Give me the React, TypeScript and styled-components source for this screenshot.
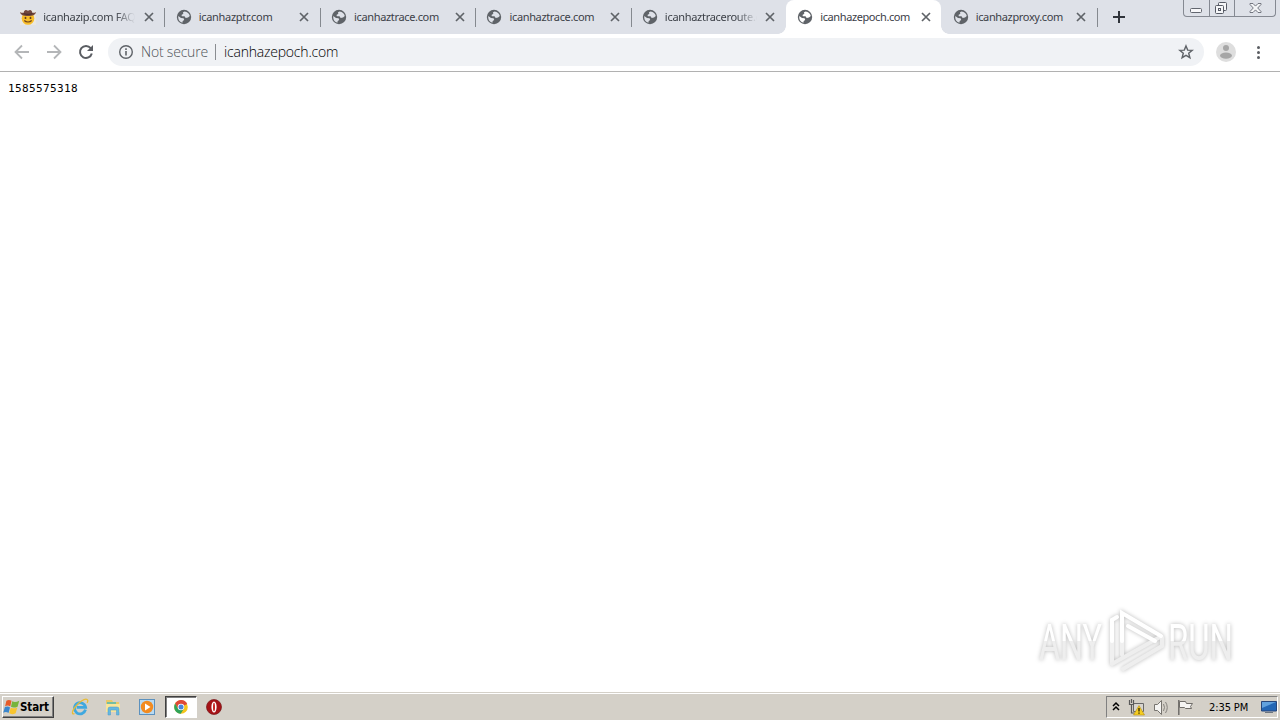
import React from "react";
import styled, { createGlobalStyle, css } from "styled-components";

const GlobalStyle = createGlobalStyle`
  html, body {
    margin: 0;
    padding: 0;
    overflow: hidden;
  }

  * {
    box-sizing: border-box;
  }
`;

const Screen = styled.div`
  position: relative;
  display: flex;
  flex-direction: column;
  width: 1280px;
  height: 720px;
  background-color: #ffffff;
  font-family: "Noto Sans", "Liberation Sans", sans-serif;
`;

const TabStrip = styled.div`
  display: flex;
  align-items: flex-start;
  height: 34px;
  padding-left: 9px;
  background-color: #dee1e8;
`;

const TabItem = styled.div<{ $active?: boolean; $divider: boolean }>`
  position: relative;
  display: flex;
  align-items: center;
  flex: none;
  width: 155.4px;
  height: 34px;
  padding-left: 11.3px;

  ${({ $divider }) =>
    $divider &&
    css`
      &::after {
        content: "";
        position: absolute;
        right: -1px;
        top: 8px;
        width: 1px;
        height: 19px;
        background-color: #85898f;
      }
    `}

  ${({ $active }) =>
    $active &&
    css`
      background-color: #ffffff;
      border-radius: 8px 8px 0 0;

      &::before,
      &::after {
        content: "";
        position: absolute;
        bottom: 0;
        width: 8px;
        height: 8px;
      }

      &::before {
        left: -8px;
        background: radial-gradient(circle at 0 0, transparent 7.5px, #fff 8px);
      }

      &::after {
        right: -8px;
        background: radial-gradient(circle at 8px 0, transparent 7.5px, #fff 8px);
      }
    `}

  > svg {
    flex: none;
  }
`;

const TabTitle = styled.span<{ $spacing: number; $fade?: boolean }>`
  flex: none;
  width: 93px;
  margin: 0 7.5px 0 7px;
  overflow: hidden;
  color: #3c4047;
  font-size: 11px;
  line-height: 18px;
  letter-spacing: ${({ $spacing }) => $spacing}px;
  white-space: nowrap;
  ${({ $fade }) =>
    $fade &&
    css`
      mask-image: linear-gradient(to right, #000 72px, transparent 92px);
    `}
`;

const NewTab = styled.div`
  display: flex;
  margin: 10px 0 0 15px;
`;

const WindowButtons = styled.div`
  display: flex;
  height: 17px;
  margin: 0 4px 0 auto;
  border: 1px solid #858992;
  border-top: 0;
  border-radius: 0 0 4px 4px;
`;

const WindowButton = styled.div<{ $width: number }>`
  display: flex;
  align-items: center;
  justify-content: center;
  width: ${({ $width }) => $width}px;

  & + & {
    border-left: 1px solid #858992;
  }
`;

const Toolbar = styled.div`
  display: flex;
  align-items: center;
  gap: 12px;
  height: 38px;
  padding: 0 12px 1px;
  border-bottom: 1px solid #b1b1b1;

  > svg {
    flex: none;
  }
`;

const AddressBar = styled.div`
  display: flex;
  align-items: center;
  flex: none;
  width: 1096px;
  height: 28px;
  padding: 0 10px;
  border-radius: 14px;
  background-color: #f0f2f5;
  color: #4f5358;
  font-family: "Open Sans", "Noto Sans", sans-serif;
  font-size: 14px;
  font-weight: 300;
  line-height: 20px;
`;

const Security = styled.span`
  width: 68px;
  margin-left: 7px;
  letter-spacing: -0.2px;
  white-space: nowrap;
`;

const AddressDivider = styled.span`
  width: 1px;
  height: 16px;
  margin: 0 8px 0 6px;
  background-color: #8a8d91;
`;

const Address = styled.span`
  flex: 1;
  color: #000000;
  letter-spacing: -0.2px;
`;

const Page = styled.main`
  position: relative;
  flex: 1;
  padding: 9px 8px;
`;

const Epoch = styled.pre`
  margin: 0;
  color: #000000;
  font-family: "DejaVu Sans Mono", monospace;
  font-size: 11px;
  line-height: 16px;
  letter-spacing: 0.38px;
`;

const Watermark = styled.svg`
  position: absolute;
  left: 1020px;
  top: 523px;
  filter: drop-shadow(0 0 2px rgba(0, 0, 0, 0.28));
`;

const Taskbar = styled.footer`
  display: flex;
  align-items: center;
  height: 28px;
  padding: 1px 2px 0;
  border-top: 1px solid #d4d0c8;
  box-shadow: inset 0 1px #ffffff;
  background-color: #d4d0c8;
`;

const StartButton = styled.div`
  display: flex;
  align-items: center;
  width: 52px;
  height: 22px;
  border: 1px solid;
  border-color: #ffffff #404040 #404040 #ffffff;
  box-shadow: inset -1px -1px #808080;
  color: #000000;
  font-family: "DejaVu Sans Condensed", "DejaVu Sans", sans-serif;
  font-size: 11.5px;
  font-weight: bold;
  letter-spacing: -0.1px;
`;

const QuickLaunch = styled.div`
  display: flex;
  margin-left: 9.5px;
`;

const LaunchItem = styled.div<{ $pressed?: boolean }>`
  display: flex;
  align-items: center;
  justify-content: center;
  width: 32px;
  height: 22px;
  margin-right: 1.7px;
  border: 1px solid transparent;

  ${({ $pressed }) =>
    $pressed &&
    css`
      border-color: #404040 #ffffff #ffffff #404040;
      box-shadow: inset 1px 1px #808080;
      background-color: #ffffff;
    `}
`;

const Tray = styled.div`
  display: flex;
  align-items: center;
  width: 172px;
  height: 22px;
  margin-left: auto;
  padding-left: 5px;
  border: 1px solid;
  border-color: #808080 #ffffff #ffffff #808080;

  > svg {
    flex: none;
    margin-right: 8px;
  }

  > svg:last-child {
    margin-right: 0;
  }
`;

const Clock = styled.span`
  flex: none;
  width: 48px;
  margin: 0 4px 0 6px;
  color: #000000;
  font-family: "DejaVu Sans Condensed", "DejaVu Sans", sans-serif;
  font-size: 11px;
  letter-spacing: -0.1px;
  white-space: nowrap;
`;

const GlobeIcon: React.FC<{ land?: string }> = ({ land = "#dee1e8" }) => (
  <svg width="16" height="16" viewBox="0 0 16 16">
    <circle cx="8" cy="8" r="7.2" fill="#5f6368" />
    <path
      d="M8.6 2.4 7 3.3l.3 1.5L5.5 6l.4 1.2 2.6.1 1.2 1.8 2.3-.5 1.8-1.5A6 6 0 0 0 8.6 2.4zM2.3 7.1 5 9l2.6.2.6 1.8-1.5 1.1-.3 1.7a6 6 0 0 1-4.1-6.7z"
      fill={land}
    />
  </svg>
);

const CowboyIcon: React.FC = () => (
  <svg width="16" height="16" viewBox="0 0 16 16">
    <path d="M0 1h16v15H0z" fill="#e9e7e2" />
    <circle cx="8" cy="9.5" r="6.3" fill="#f8bd28" />
    <path
      d="M0 3c.7 3 3 4 8 4s7.3-1 8-4c-1 .7-2.4 1-3.7.8C12 1.5 10.7.7 9.4 1.2L8 1.7l-1.4-.5C5.3.7 4 1.5 3.7 3.8 2.4 4 1 3.7 0 3z"
      fill="#73483d"
    />
    <path d="M3.6 4.1c2.6 1 6.2 1 8.8 0v1.2c-2.6 1-6.2 1-8.8 0z" fill="#4d302e" />
    <ellipse cx="5.5" cy="8.9" rx=".9" ry="1.2" fill="#67401c" />
    <ellipse cx="10.5" cy="8.9" rx=".9" ry="1.2" fill="#67401c" />
    <path d="M4.3 11.5c2 2 5.4 2 7.4 0" fill="none" stroke="#70451e" strokeWidth="1.2" />
  </svg>
);

const CloseIcon: React.FC = () => (
  <svg width="10" height="10" viewBox="0 0 10 10">
    <path d="m1 1 8 8M9 1 1 9" stroke="#5f6368" strokeWidth="1.7" />
  </svg>
);

const ArrowIcon: React.FC<{ forward?: boolean }> = ({ forward }) => (
  <svg width="20" height="20" viewBox="0 0 20 20">
    <path
      d="M17 10H4M10 3.5 3.5 10l6.5 6.5"
      transform={forward ? "rotate(180 10 10)" : undefined}
      fill="none"
      stroke="#b4b6b8"
      strokeWidth="1.8"
    />
  </svg>
);

const ReloadIcon: React.FC = () => (
  <svg width="20" height="20" viewBox="0 0 20 20">
    <path
      d="M14.7 6.2A6 6 0 1 0 15.8 11.5"
      fill="none"
      stroke="#5a5d62"
      strokeWidth="2"
    />
    <path d="M17 3v6h-6z" fill="#5a5d62" />
  </svg>
);

const InfoIcon: React.FC = () => (
  <svg width="16" height="16" viewBox="0 0 16 16">
    <circle cx="8" cy="8" r="6.3" fill="none" stroke="#5f6368" strokeWidth="1.4" />
    <path d="M7.2 7h1.6v4.5H7.2zM7.2 4.3h1.6v1.6H7.2z" fill="#5f6368" />
  </svg>
);

const StarIcon: React.FC = () => (
  <svg width="16" height="16" viewBox="0 0 16 16">
    <path
      d="m8 1.9 1.7 4.2 4.5.3-3.5 2.9 1.2 4.4L8 11.3l-3.9 2.4 1.2-4.4-3.5-2.9 4.5-.3z"
      fill="none"
      stroke="#5f6368"
      strokeWidth="1.4"
    />
  </svg>
);

const ProfileIcon: React.FC = () => (
  <svg width="20" height="20" viewBox="0 0 20 20">
    <circle cx="10" cy="10" r="10" fill="#dedede" />
    <circle cx="10" cy="5.9" r="3" fill="#a6a6a6" />
    <ellipse cx="10" cy="13.6" rx="6" ry="3.1" fill="#a6a6a6" />
  </svg>
);

const MenuIcon: React.FC = () => (
  <svg width="20" height="20" viewBox="0 0 20 20">
    <g fill="#5a5d62">
      <circle cx="10.5" cy="5.5" r="1.5" />
      <circle cx="10.5" cy="10.5" r="1.5" />
      <circle cx="10.5" cy="15.5" r="1.5" />
    </g>
  </svg>
);

const MinimizeIcon: React.FC = () => (
  <svg width="13" height="16" viewBox="0 0 13 16">
    <rect x=".5" y="8.5" width="11" height="4" rx="1" fill="#f7f7f9" stroke="#62666f" />
  </svg>
);

const RestoreIcon: React.FC = () => (
  <svg width="14" height="16" viewBox="0 0 14 16">
    <g fill="#f5f6f8" stroke="#565a65">
      <rect x="3.5" y="2.5" width="8" height="8" rx="1" />
      <rect x=".5" y="5.5" width="8" height="8" rx="1" />
      <rect x="3.5" y="8.5" width="2" height="2" />
    </g>
  </svg>
);

const WindowCloseIcon: React.FC = () => (
  <svg width="13" height="16" viewBox="0 0 13 16">
    <path
      d="M1 3.5h3l2.5 2.6L9 3.5h3v1L8.7 8l3.3 3.5v1H9L6.5 9.9 4 12.5H1v-1L4.3 8 1 4.5z"
      fill="#f5f6f8"
      stroke="#666a74"
      strokeWidth=".9"
    />
  </svg>
);

const WindowsIcon: React.FC = () => (
  <svg width="17" height="17" viewBox="0 0 16 16">
    <path d="M3.2 1.6C5 .5 6.5.7 8 1.7L6.8 7C5.3 6 3.8 6 2 6.8z" fill="#e65b28" />
    <path d="M8.7 2.1c1.8 1 3.9.9 6.6-.5l-1.6 5.6c-2.3 1.1-4.4 1.2-6.2.2z" fill="#77b43c" />
    <path d="M1.8 7.6c1.7-.7 3.2-.7 4.8.3l-1.4 5.2c-1.5-1.1-3.2-1.2-5-.2z" fill="#3a86cc" />
    <path d="M7.3 8.2c1.9.9 3.9.8 6.2-.2l-1.6 5.4c-2.2 1.1-4.2 1.2-6.1.1z" fill="#f8c52f" />
  </svg>
);

const ExplorerIcon: React.FC = () => (
  <svg width="18" height="18" viewBox="0 0 18 18">
    <path
      d="M14.5 11.7A5.6 5.6 0 1 1 14.6 9.3H5.7"
      fill="none"
      stroke="#3fa8df"
      strokeWidth="2.8"
    />
    <path
      d="M3.5 15.5c-3 1.8-2.6-2.2.3-6C7.5 4.3 13.8.2 16 1.5c1 .6.8 2.2.1 3.4"
      fill="none"
      stroke="#e8bc35"
      strokeWidth="1.3"
    />
  </svg>
);

const FolderIcon: React.FC = () => (
  <svg width="18" height="18" viewBox="0 0 18 18">
    <path d="M2 2h6l1 2h6v9H2z" fill="#e9c969" />
    <path d="M3 4h9v3H3z" fill="#73bea3" />
    <path d="M2 6h14v8H2z" fill="#f8e59a" />
    <path
      d="M4 17v-6q0-2 2-2h7q2 0 2 2v6h-2.5v-5h-6v5z"
      fill="#65b8df"
      stroke="#4b9aca"
      strokeWidth=".5"
    />
  </svg>
);

const MediaIcon: React.FC = () => (
  <svg width="18" height="18" viewBox="0 0 18 18">
    <rect x="1.5" y="1.5" width="15" height="15" fill="#b8daf2" stroke="#5c91be" />
    <circle cx="9" cy="9" r="6.2" fill="#f28b20" />
    <path d="m7 5.5 5.5 3.5L7 12.5z" fill="#ffffff" />
  </svg>
);

const ChromeIcon: React.FC = () => (
  <svg width="16" height="16" viewBox="0 0 16 16">
    <circle cx="8" cy="8" r="6.8" fill="#f5c51c" />
    <path d="M8 8 14.2 5A6.8 6.8 0 0 0 2.1 4.6L5.2 10z" fill="#df4937" />
    <path d="M2.1 4.6A6.8 6.8 0 0 0 7.7 14.8L11 9.6 5.2 10z" fill="#2fa35a" />
    <circle cx="8" cy="8" r="3.3" fill="#ffffff" />
    <circle cx="8" cy="8" r="2.5" fill="#4885db" />
  </svg>
);

const OperaIcon: React.FC = () => (
  <svg width="16" height="16" viewBox="0 0 16 16">
    <circle cx="8" cy="8" r="7.5" fill="#a61216" stroke="#761519" strokeWidth=".7" />
    <ellipse cx="8" cy="8" rx="2.6" ry="5.5" fill="#ffffff" />
    <ellipse cx="8" cy="8" rx="1" ry="4.3" fill="#c9221f" />
  </svg>
);

const NetworkIcon: React.FC = () => (
  <svg width="17" height="17" viewBox="0 0 17 17">
    <path d="M5.5 4.5h10v8h-10z" fill="#d8d5cf" stroke="#686868" />
    <path d="M8 15h6" stroke="#686868" />
    <path d="M1.5 1v4.5h4V1M3.5 0v4M3.5 6v8h3" fill="none" stroke="#595959" strokeWidth="1.2" />
    <path d="m11 6.5 5.5 9.5H5.5z" fill="#f5cd21" stroke="#b28b12" strokeWidth=".6" />
    <path d="M10.3 9h1.4v3.6h-1.4zM10.3 13.4h1.4v1.3h-1.4z" fill="#3b3000" />
  </svg>
);

const SpeakerIcon: React.FC = () => (
  <svg width="17" height="17" viewBox="0 0 17 17">
    <path d="M1.5 5.5h3l4-4v14l-4-4h-3z" fill="#f5f4f2" stroke="#77746f" />
    <path d="M10.5 5q2 3.5 0 7M12.5 3q3.5 5.5 0 11" fill="none" stroke="#85827d" />
  </svg>
);

const FlagIcon: React.FC = () => (
  <svg width="17" height="17" viewBox="0 0 17 17">
    <path d="M.8 1v15" stroke="#706d69" strokeWidth="1.5" />
    <path d="M1.5 2.5h6l1 2h6l-2 3 1 2h-6l-1-1h-5z" fill="#f5f4f2" stroke="#706d69" />
  </svg>
);

const DesktopIcon: React.FC = () => (
  <svg width="16" height="16" viewBox="0 0 16 16">
    <path d="M.5 2.5h15v9.5H.5z" fill="#2467b5" stroke="#28477b" />
    <path d="M1 3h14L1 9z" fill="#62a2de" />
    <path d="M4 13.5h8" stroke="#6c7580" />
  </svg>
);

const AnyRunMark: React.FC = () => (
  <Watermark width="240" height="90" viewBox="0 0 240 90">
    <defs>
      <linearGradient id="lettering" gradientUnits="userSpaceOnUse" x1="0" y1="0" x2="0" y2="90">
        <stop offset="0.51" stopColor="#ffffff" />
        <stop offset="0.511" stopColor="#eeeeee" />
      </linearGradient>
    </defs>
    <g fill="url(#lettering)" fontFamily="Roboto, sans-serif" fontSize="50">
      <text x="19" y="64.5" textLength="63" lengthAdjust="spacingAndGlyphs">ANY</text>
      <text x="148" y="64.5" textLength="65" lengthAdjust="spacingAndGlyphs">RUN</text>
    </g>
    <g fill="none" strokeWidth="4" strokeLinecap="round">
      <path d="M92 68V46M102 60V46" stroke="#f0f0f0" />
      <path d="m92 69 7-4 41-23M103 74l39-23v-9" stroke="#eeeeee" />
      <path d="M92 46V25l5-3" stroke="#ffffff" />
      <path d="M102 46V18l39 23M108 31l27 15" stroke="#ffffff" />
    </g>
  </Watermark>
);

const tabs = [
  { title: "icanhazip.com FAQ", spacing: -0.32, fade: true, divider: true },
  { title: "icanhazptr.com", spacing: -0.3, divider: true },
  { title: "icanhaztrace.com", spacing: -0.35, divider: true },
  { title: "icanhaztrace.com", spacing: -0.35, divider: true },
  { title: "icanhaztraceroute.com", spacing: -0.3, fade: true, divider: false },
  { title: "icanhazepoch.com", spacing: -0.4, active: true, divider: false },
  { title: "icanhazproxy.com", spacing: -0.35, divider: true },
];

const App: React.FC = () => {
  return (
    <Screen>
      <GlobalStyle />
      <TabStrip>
        {tabs.map((tab, index) => (
          <TabItem key={index} $active={tab.active} $divider={tab.divider}>
            {index === 0 ? (
              <CowboyIcon />
            ) : (
              <GlobeIcon land={tab.active ? "#ffffff" : undefined} />
            )}
            <TabTitle $spacing={tab.spacing} $fade={tab.fade}>
              {tab.title}
            </TabTitle>
            <CloseIcon />
          </TabItem>
        ))}
        <NewTab>
          <svg width="14" height="14" viewBox="0 0 14 14">
            <path d="M7 1v12M1 7h12" stroke="#30343b" strokeWidth="2" />
          </svg>
        </NewTab>
        <WindowButtons>
          <WindowButton $width={25}>
            <MinimizeIcon />
          </WindowButton>
          <WindowButton $width={25}>
            <RestoreIcon />
          </WindowButton>
          <WindowButton $width={41}>
            <WindowCloseIcon />
          </WindowButton>
        </WindowButtons>
      </TabStrip>
      <Toolbar>
        <ArrowIcon />
        <ArrowIcon forward />
        <ReloadIcon />
        <AddressBar>
          <InfoIcon />
          <Security>Not secure</Security>
          <AddressDivider />
          <Address>icanhazepoch.com</Address>
          <StarIcon />
        </AddressBar>
        <ProfileIcon />
        <MenuIcon />
      </Toolbar>
      <Page>
        <Epoch>1585575318</Epoch>
        <AnyRunMark />
      </Page>
      <Taskbar>
        <StartButton>
          <WindowsIcon />
          Start
        </StartButton>
        <QuickLaunch>
          <LaunchItem>
            <ExplorerIcon />
          </LaunchItem>
          <LaunchItem>
            <FolderIcon />
          </LaunchItem>
          <LaunchItem>
            <MediaIcon />
          </LaunchItem>
          <LaunchItem $pressed>
            <ChromeIcon />
          </LaunchItem>
          <LaunchItem>
            <OperaIcon />
          </LaunchItem>
        </QuickLaunch>
        <Tray>
          <svg width="8" height="14" viewBox="0 0 8 14">
            <path d="m1 6 3-3 3 3M1 10l3-3 3 3" fill="none" stroke="#000000" strokeWidth="1.5" />
          </svg>
          <NetworkIcon />
          <SpeakerIcon />
          <FlagIcon />
          <Clock>2:35 PM</Clock>
          <DesktopIcon />
        </Tray>
      </Taskbar>
    </Screen>
  );
};

export default App;
